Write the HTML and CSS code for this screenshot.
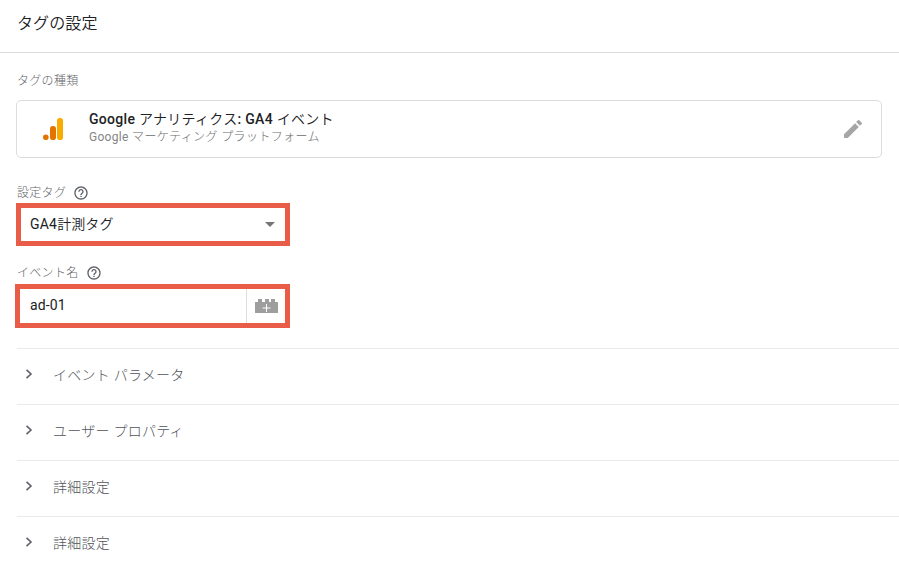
FILE: index.html
```html
<!DOCTYPE html>
<html lang="ja">
<head>
<meta charset="utf-8">
<title>タグの設定</title>
<link rel="stylesheet" href="styles.css">
</head>
<body>
<header class="header"><h1>タグの設定</h1></header>
<main>
  <div class="label type-label">タグの種類</div>
  <section class="card">
    <svg class="logo" width="20" height="22" viewBox="0 0 20 22"><circle cx="2.8" cy="19.2" r="2.8" fill="#e37400"/><rect x="7" y="8" width="6" height="14" rx="2.8" fill="#e37400"/><rect x="14" y="0" width="6" height="22" rx="2.8" fill="#f9ab00"/></svg>
    <div class="card-text">
      <div class="card-title"><b>Google</b> アナリティクス<b>: GA4</b> イベント</div>
      <div class="card-sub"><span class="latin">Google</span> マーケティング プラットフォーム</div>
    </div>
    <svg class="pencil" width="24" height="24" viewBox="0 0 24 24"><path fill="#a6a6a6" d="M3 17.25V21h3.75L17.81 9.94l-3.75-3.75L3 17.25zM20.71 7.04a1 1 0 0 0 0-1.41l-2.34-2.34a1 1 0 0 0-1.41 0l-1.83 1.83 3.75 3.75 1.83-1.83z"/></svg>
  </section>
  <div class="label config-label">設定タグ
    <svg class="help" width="16" height="16" viewBox="0 0 24 24"><path d="M11 18h2v-2h-2v2zm1-16C6.48 2 2 6.48 2 12s4.48 10 10 10 10-4.48 10-10S17.52 2 12 2zm0 18c-4.41 0-8-3.59-8-8s3.59-8 8-8 8 3.59 8 8-3.59 8-8 8zm0-14c-2.21 0-4 1.79-4 4h2c0-1.1.9-2 2-2s2 .9 2 2c0 2-3 1.75-3 5h2c0-2.25 3-2.5 3-5 0-2.21-1.79-4-4-4z"/></svg>
  </div>
  <div class="box select"><span class="value"><span class="latin">GA4</span>計測タグ</span><svg width="10" height="5" viewBox="0 0 10 5"><path fill="#757575" d="M0 0h10L5 5z"/></svg></div>
  <div class="label event-label">イベント名
    <svg class="help" width="16" height="16" viewBox="0 0 24 24"><path d="M11 18h2v-2h-2v2zm1-16C6.48 2 2 6.48 2 12s4.48 10 10 10 10-4.48 10-10S17.52 2 12 2zm0 18c-4.41 0-8-3.59-8-8s3.59-8 8-8 8 3.59 8 8-3.59 8-8 8zm0-14c-2.21 0-4 1.79-4 4h2c0-1.1.9-2 2-2s2 .9 2 2c0 2-3 1.75-3 5h2c0-2.25 3-2.5 3-5 0-2.21-1.79-4-4-4z"/></svg>
  </div>
  <div class="box input"><span class="value">ad-01</span>
    <div class="variable"><svg width="23" height="14" viewBox="0 0 23 14"><path fill="#9e9e9e" d="M0 3h3V0h4v3h3V0h4v3h2V0h4v3h3v11H0z"/><path fill="#fff" d="M11 5h1v3.500h3.500v1H12V13h-1V9.500H7.500v-1H11z"/></svg></div>
  </div>
  <div class="sections">
    <div class="row"><svg class="chev" width="8" height="10" viewBox="0 0 8 10"><path d="M1.500 .8 6 5 1.500 9.200"/></svg><span>イベント パラメータ</span></div>
    <div class="row"><svg class="chev" width="8" height="10" viewBox="0 0 8 10"><path d="M1.500 .8 6 5 1.500 9.200"/></svg><span>ユーザー プロパティ</span></div>
    <div class="row"><svg class="chev" width="8" height="10" viewBox="0 0 8 10"><path d="M1.500 .8 6 5 1.500 9.200"/></svg><span>詳細設定</span></div>
    <div class="row"><svg class="chev" width="8" height="10" viewBox="0 0 8 10"><path d="M1.500 .8 6 5 1.500 9.200"/></svg><span>詳細設定</span></div>
  </div>
</main>
</body>
</html>
```
FILE: styles.css
```css
* { box-sizing: border-box; }
body {
  margin: 0;
  height: 568px;
  overflow: hidden;
  background: #fff;
  color: #202124;
  font-family: Roboto, "Noto Sans CJK JP", sans-serif;
  font-size: 14px;
  letter-spacing: .25px;
}
svg { display: block; flex: none; }
.latin { font-weight: 400; letter-spacing: .2px; }
.header { height: 53px; padding: 12px 17px 0; border-bottom: 1px solid #dadce0; }
h1 { margin: 0; font-size: 16px; line-height: 24px; font-weight: 350; letter-spacing: .1px; }
main { padding-left: 16px; }
.label {
  display: flex;
  align-items: center;
  gap: 7px;
  height: 16px;
  padding-left: 1px;
  font-size: 12px;
  line-height: 16px;
  letter-spacing: .3px;
  font-weight: 300;
  color: #5f6368;
}
.help { fill: #5f6368; }
.type-label { margin-top: 20px; }
.card {
  display: flex;
  align-items: center;
  width: 866px;
  height: 58px;
  margin-top: 11px;
  padding: 0 16px 0 26px;
  border: 1px solid #dadce0;
  border-radius: 5px;
}
.logo { margin-right: 26px; }
.card-text { flex: 1; margin-top: -2px; }
.card-title { line-height: 19px; font-weight: 350; letter-spacing: .3px; }
.card-title b { font-weight: 500; }
.card-sub { font-size: 12px; line-height: 17px; letter-spacing: .4px; font-weight: 300; color: #6b6b6b; }
.card-sub .latin { color: #858585; letter-spacing: .3px; }
.config-label { margin-top: 27px; }
.box { display: flex; align-items: center; border: 5px solid #e85c48; background: #fff; }
.value { padding-bottom: 2px; letter-spacing: .1px; }
.select .value { padding-bottom: 4px; }
.select { width: 274px; height: 43px; margin-top: 2px; padding: 0 10px 0 9px; justify-content: space-between; font-weight: 350; }
.event-label { margin-top: 19px; }
.input { width: 275px; height: 44px; margin: 3px 0 0 -1px; padding-left: 10px; justify-content: space-between; }
.variable { display: flex; align-items: center; justify-content: center; width: 39px; height: 34px; padding-left: 1px; border-left: 1px solid #dadce0; }
.sections { margin: 20px 0 0 1px; }
.row {
  display: flex;
  align-items: center;
  height: 56px;
  padding: 0 0 5px 8px;
  border-top: 1px solid #e8eaed;
  font-weight: 300;
  color: #50545a;
}
.row span { padding-bottom: 1px; }
.chev { margin-right: 20px; fill: none; stroke: #5f6368; stroke-width: 1.6; }
```
